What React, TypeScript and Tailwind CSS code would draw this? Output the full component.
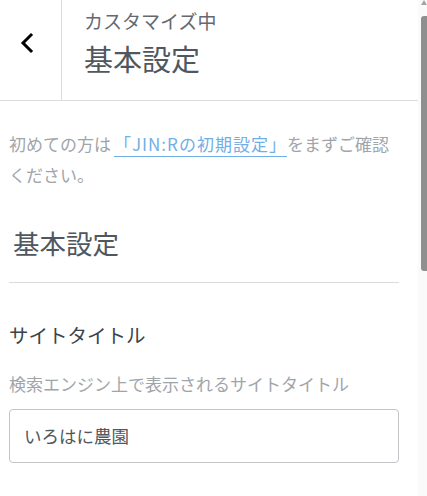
function BackButton() {
    return (
        <button className="flex w-[62px] shrink-0 items-start justify-start border-r border-[#dcdcde] pl-[17px] pt-[30px]">
            <svg width="18" height="26" viewBox="0 0 18 26" fill="none">
                <polyline
                    points="14,5 6,13 14,21"
                    stroke="#000"
                    strokeWidth="3"
                    strokeLinecap="square"
                    strokeLinejoin="miter"
                />
            </svg>
        </button>
    );
}

function Scrollbar() {
    return (
        <div className="relative w-[9px] shrink-0 bg-[#fafafa]">
            <div className="absolute right-0 top-0 h-0 w-0 border-x-[3px] border-b-[5px] border-x-transparent border-b-[#a3a3a3]" />
            <div className="absolute right-0 top-[16px] h-[255px] w-[6px] rounded-l-[3px] bg-[#8f8f8f]" />
        </div>
    );
}

export default function App() {
    return (
        <div
            className="flex h-[496px] w-[427px] overflow-hidden bg-white"
            style={{ fontFamily: '"Noto Sans CJK JP", "Noto Sans", sans-serif' }}
        >
            <div className="min-w-0 flex-1">
                <header className="flex h-[101px] border-b border-[#dcdcde]">
                    <BackButton />
                    <div className="pl-[22px] pt-[8px]">
                        <div className="text-[19px] leading-[26px] text-[#646970]">カスタマイズ中</div>
                        <h1 className="mt-[6px] text-[29px] leading-[36px] text-[#50575e]">基本設定</h1>
                    </div>
                </header>

                <div className="pl-[9px] pr-[19px]">
                    <p className="pr-[10px] pt-[28px] text-[17px] leading-[30.5px] text-[#a0a5aa]">
                        初めての方は
                        <a className="ml-[3px] border-b border-[#72aee6] tracking-[1px] text-[#72aee6]">「JIN:Rの初期設定」</a>
                        をまずご確認ください。
                    </p>

                    <h2 className="ml-[4px] mt-[36px] text-[26.5px] leading-[34px] text-[#50575e]">基本設定</h2>
                    <div className="mt-[22px] border-b border-[#dcdcde]" />

                    <h3 className="mt-[38px] text-[19.5px] leading-[28px] text-[#3c434a]">サイトタイトル</h3>
                    <p className="mt-[23px] text-[17px] leading-[24px] text-[#a0a5aa]">
                        検索エンジン上で表示されるサイトタイトル
                    </p>
                    <div className="mt-[13px] flex h-[54px] items-center rounded-[4px] border border-[#c3c4c7] px-[14px] text-[17.5px] text-[#50575e]">
                        いろはに農園
                    </div>
                </div>
            </div>
            <Scrollbar />
        </div>
    );
}
